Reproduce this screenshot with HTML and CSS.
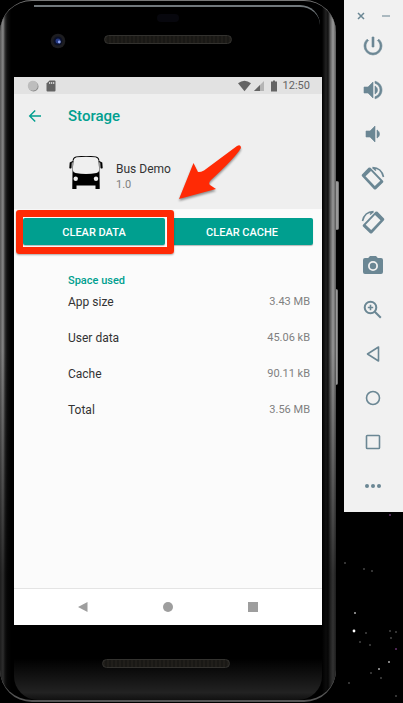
FILE: index.html
```html
<!DOCTYPE html>
<html lang="en">
<head>
<meta charset="utf-8">
<meta name="viewport" content="width=device-width">
<title>Storage</title>
<link rel="stylesheet" href="styles.css">
</head>
<body>
<svg class="stars" viewBox="0 0 67 191" aria-hidden="true">
  <g fill="#444"><circle cx="9" cy="51" r="1"/><circle cx="28" cy="57" r="1"/><circle cx="36" cy="59" r="1"/><circle cx="30" cy="121" r="1"/><circle cx="24" cy="130" r="1"/><circle cx="54" cy="119" r="1"/><circle cx="60" cy="120" r="1"/><circle cx="55" cy="126" r="1"/><circle cx="35" cy="161" r="1"/><circle cx="45" cy="166" r="1"/><circle cx="60" cy="184" r="1"/><circle cx="13" cy="171" r="1"/><circle cx="34" cy="133" r="1"/></g>
  <g fill="#aaa"><circle cx="19" cy="101" r="1"/><circle cx="53" cy="150" r="1"/><circle cx="43" cy="157" r="1"/></g>
  <circle cx="18" cy="119" r="1.4" fill="#fff"/>
  <g fill="#63306b"><circle cx="54" cy="3" r="1"/><circle cx="60" cy="137" r="1"/></g>
</svg>

<main class="phone">
  <span class="side-key power-key"></span>
  <span class="side-key volume-key"></span>
  <div class="bezel top">
    <svg class="camera" viewBox="0 0 16 16" aria-hidden="true"><circle cx="8" cy="8" r="7.3" fill="#1d1d20"/><circle cx="8" cy="8" r="4.5" fill="#0b1026"/><circle cx="8" cy="8" r="2.5" fill="#253a86"/><circle cx="9.300" cy="9" r="1.4" fill="#8fa6f2"/></svg>
    <span class="speaker"></span>
    <span class="sensor"></span>
  </div>

  <div class="screen">
    <div class="status">
      <svg class="s-dot" viewBox="0 0 12 12" aria-hidden="true"><circle cx="6.500" cy="6.500" r="5" fill="#888"/><circle cx="5.800" cy="5.800" r="5" fill="#bdbdbd"/></svg>
      <svg class="s-card" viewBox="0 0 10 12" aria-hidden="true"><path fill="#646464" d="M3.500.5H8.500Q9.500.5 9.500 1.500V10.500Q9.500 11.500 8.500 11.500H1.500Q.5 11.500.5 10.500V3.500Z"/><path stroke="#e2e2e2" d="M3.700 2v2M5.700 2v2M7.700 2v2"/></svg>
      <svg class="s-wifi" viewBox="0 0 13 12" aria-hidden="true"><path fill="#646464" d="M0 3.300Q6.500-1.800 13 3.300L6.500 11.300Z"/></svg>
      <svg class="s-signal" viewBox="0 0 10 12" aria-hidden="true"><path fill="#b5b5b5" d="M10 1V11H0Z"/><path fill="#646464" d="M6 5V11H0Z"/></svg>
      <svg class="s-battery" viewBox="0 0 6 12" aria-hidden="true"><path fill="#646464" d="M2 .5H4V1.500H6V11.500H0V1.500H2Z"/></svg>
      <time>12:50</time>
    </div>

    <header class="head">
      <div class="title-row">
        <button class="plain back" aria-label="Back"><svg viewBox="0 0 14 14" aria-hidden="true"><path fill="none" stroke="#009f8f" stroke-width="1.400" d="M13 7H2M7.200 1.500 1.700 7l5.500 5.500"/></svg></button>
        <h1>Storage</h1>
      </div>
      <div class="app">
        <svg class="bus" viewBox="0 0 34 34" aria-hidden="true">
          <path d="M7 .5Q17-.8 27 .5Q30 1 30.300 4L30.700 29V33H26.500V29.500H7.500V33H3.300V29L3.700 4Q4 1 7 .5Z"/>
          <path fill="#efefef" d="M7.500 1.300Q17 .2 26.500 1.300Q29.300 2 29.500 4.500L30.200 14Q30 16.500 27.500 17Q17 18.800 6.500 17Q4 16.500 3.800 14L4.500 4.500Q4.700 2 7.500 1.300Z"/>
          <path fill="none" stroke="#000" stroke-width="1.200" d="M4.200 5.500 1.800 6.500M29.800 5.500l2.400 1"/>
          <path d="M.7 6.500Q2 5.500 2.800 6.500L2.500 12Q1.500 13.200.3 12ZM33.300 6.500Q32 5.500 31.200 6.500L31.500 12Q32.500 13.200 33.700 12Z"/>
          <circle cx="6.700" cy="22.800" r="2.200" fill="#efefef"/><circle cx="27" cy="22.800" r="2.200" fill="#efefef"/>
        </svg>
        <div class="label"><p class="name">Bus Demo</p><p class="version">1.0</p></div>
      </div>
      <svg class="arrow" viewBox="0 0 66 58" aria-hidden="true"><path fill="#ff2a05" d="M2 53 16.500 17 21 26Q23 26.500 27 24.500L60 0Q64-2 64 2Q58 12 34 34Q31 37 33 39L39 43Z"/></svg>
    </header>

    <div class="actions">
      <div class="marked"><button class="action">CLEAR DATA</button></div>
      <button class="action">CLEAR CACHE</button>
    </div>

    <section class="usage">
      <h2 id="space">Space used</h2>
      <table aria-labelledby="space">
        <tr><th scope="row">App size</th><td>3.43 MB</td></tr>
        <tr><th scope="row">User data</th><td>45.06 kB</td></tr>
        <tr><th scope="row">Cache</th><td>90.11 kB</td></tr>
        <tr><th scope="row">Total</th><td>3.56 MB</td></tr>
      </table>
    </section>

    <nav class="nav">
      <button class="plain" aria-label="Back"><svg viewBox="0 0 12 12" aria-hidden="true"><path d="M10.500 1V11L1 6Z"/></svg></button>
      <button class="plain" aria-label="Home"><svg viewBox="0 0 12 12" aria-hidden="true"><circle cx="6" cy="6" r="5"/></svg></button>
      <button class="plain" aria-label="Overview"><svg viewBox="0 0 12 12" aria-hidden="true"><path d="M1 1H11V11H1Z"/></svg></button>
    </nav>
  </div>

  <div class="bezel bottom"><span class="speaker"></span></div>
</main>

<aside class="tools">
  <div class="window">
    <button class="plain" aria-label="Close"><svg viewBox="0 0 10 10" aria-hidden="true"><path d="M2 2 8 8M8 2 2 8"/></svg></button>
    <button class="plain" aria-label="Minimize"><svg viewBox="0 0 10 10" aria-hidden="true"><path opacity=".7" d="M1 5H9"/></svg></button>
  </div>
  <button class="plain tool" aria-label="Power"><svg class="bold" viewBox="0 0 24 24"><path d="M13 3h-2v10h2V3zm4.830 2.170l-1.420 1.420C17.990 7.860 19 9.810 19 12c0 3.870-3.130 7-7 7s-7-3.130-7-7c0-2.190 1.010-4.140 2.580-5.420L6.170 5.170C4.230 6.820 3 9.260 3 12a9 9 0 0018 0c0-2.740-1.230-5.180-3.170-6.830z"/></svg></button>
  <button class="plain tool" aria-label="Volume up"><svg class="bold" viewBox="0 0 24 24"><path d="M3 9v6h4l5 5V4L7 9H3zm13.500 3c0-1.770-1.020-3.290-2.500-4.030v8.050c1.480-.73 2.500-2.250 2.500-4.020zM14 3.230v2.060c2.890.86 5 3.540 5 6.710s-2.110 5.850-5 6.710v2.060c4.010-.91 7-4.490 7-8.770s-2.990-7.860-7-8.770z"/></svg></button>
  <button class="plain tool" aria-label="Volume down"><svg class="bold" viewBox="0 0 24 24"><path d="M18.500 12c0-1.770-1.020-3.290-2.500-4.030v8.050c1.480-.73 2.500-2.250 2.500-4.020zM5 9v6h4l5 5V4L9 9H5z"/></svg></button>
  <button class="plain tool" aria-label="Rotate left"><svg viewBox="0 0 24 24"><path fill-rule="evenodd" d="M7.500 1.800Q8.500 1 9.500 1.800L22 14.700Q22.800 15.700 22 16.500L15 23.200Q14 24 13 23.200L1 10.300Q.3 9.300 1 8.500ZM10 5 4.500 10.300 13.800 20 19.300 14.700Z"/><path class="line" d="M11.500 1.500Q20.500 1.800 22.500 11M11.500 1.500 15 4.500"/></svg></button>
  <button class="plain tool" aria-label="Rotate right"><svg class="flip" viewBox="0 0 24 24"><path fill-rule="evenodd" d="M7.500 1.800Q8.500 1 9.500 1.800L22 14.700Q22.800 15.700 22 16.500L15 23.200Q14 24 13 23.200L1 10.300Q.3 9.300 1 8.500ZM10 5 4.500 10.300 13.800 20 19.300 14.700Z"/><path class="line" d="M11.500 1.500Q20.500 1.800 22.500 11M11.500 1.500 15 4.500"/></svg></button>
  <button class="plain tool" aria-label="Screenshot"><svg viewBox="0 0 24 24"><path fill-rule="evenodd" d="M9 2 7.200 4H4Q2 4 2 6V18Q2 20 4 20H20Q22 20 22 18V6Q22 4 20 4H16.800L15 2ZM12 7A5 5 0 1 1 12 17A5 5 0 1 1 12 7Z"/><circle cx="12" cy="12" r="3.200"/></svg></button>
  <button class="plain tool" aria-label="Zoom"><svg viewBox="0 0 24 24"><circle class="line heavy" cx="9.500" cy="9.500" r="5.800"/><path class="line" d="M9.500 6.800V12.200M6.800 9.500H12.200"/><path class="line heavy" d="m13.800 13.800 6 6"/></svg></button>
  <button class="plain tool" aria-label="Back"><svg viewBox="0 0 24 24"><path class="line" d="M17.500 5V19L6.500 12Z"/></svg></button>
  <button class="plain tool" aria-label="Home"><svg viewBox="0 0 24 24"><circle class="line" cx="12" cy="12" r="6.500"/></svg></button>
  <button class="plain tool" aria-label="Overview"><svg viewBox="0 0 24 24"><rect class="line" x="5.500" y="5.500" width="13" height="13" rx=".8"/></svg></button>
  <button class="plain tool" aria-label="More"><svg viewBox="0 0 24 24"><circle cx="6" cy="12" r="2"/><circle cx="12" cy="12" r="2"/><circle cx="18" cy="12" r="2"/></svg></button>
</aside>
</body>
</html>
```
FILE: styles.css
```css
* { box-sizing: border-box; }

body {
  margin: 0;
  display: grid;
  grid-template-columns: minmax(0, 1fr) 59px;
  column-gap: 8px;
  align-items: start;
  position: relative;
  background: #000;
  font-family: Roboto, "Liberation Sans", sans-serif;
}

h1, h2, p { margin: 0; }
svg { display: block; }

.plain {
  padding: 0;
  border: 0;
  background: none;
}

.stars {
  position: absolute;
  right: 0;
  top: 512px;
  width: 67px;
  height: 191px;
}

/* Phone body */
.phone {
  position: relative;
  padding: 0 14px;
  border-radius: 32px;
  border-top: 1px solid #777;
  border-bottom: 2px solid #555;
  background:
    linear-gradient(#0000 50%, #000a 82%),
    linear-gradient(90deg, #555 0, #888 3px, #333 5px, #111 7px, #000 11px, #000 calc(100% - 14px), #222 calc(100% - 10px), #111 calc(100% - 8px), #555 calc(100% - 6px), #999 calc(100% - 3px), #555 100%);
}

.side-key {
  position: absolute;
  left: 100%;
  width: 3px;
  border: 1px solid #777;
  border-left: 0;
  border-radius: 0 2px 2px 0;
  background: #999;
}
.power-key { top: 180px; height: 49px; }
.volume-key { top: 288px; height: 96px; width: 2px; }

.bezel {
  position: relative;
  display: flex;
  justify-content: center;
}
.top {
  height: 76px;
  padding-top: 34px;
}
.top::before {
  content: "";
  position: absolute;
  inset: 4px 2px auto 20px;
  height: 20px;
  border-top: 2px solid #70777b;
  border-radius: 0 20px 0 0;
}
.bottom {
  height: 75px;
  padding: 34px 4px 0 0;
  background: linear-gradient(#000 45%, #222 90%, #111);
  border-radius: 0 0 24px 24px;
}
.speaker {
  width: 128px;
  height: 9px;
  border: 1px solid #33322f;
  border-radius: 5px;
  background: repeating-linear-gradient(90deg, #201e1a 0 2px, #191815 2px 4px);
}
.camera {
  position: absolute;
  left: 36px;
  top: 32px;
  width: 16px;
  height: 16px;
}
.sensor {
  position: absolute;
  left: 143px;
  top: 13px;
  width: 22px;
  height: 8px;
  border-radius: 4px;
  background: #07070d;
}

/* Screen */
.screen {
  position: relative;
  background: #fbfbfb;
}

.status {
  display: flex;
  align-items: center;
  height: 17px;
  padding: 0 12px 0 13px;
  background: #e2e2e2;
  color: #646464;
  font-size: 11px;
  line-height: 16px;
}
.status svg { height: 12px; }
.s-dot { width: 12px; margin-right: 7px; }
.s-card { width: 10px; margin-right: auto; }
.s-wifi { width: 13px; margin-right: 3px; }
.s-signal { width: 10px; margin-right: 7px; }
.s-battery { width: 6px; margin-right: 6px; }

.head {
  position: relative;
  height: 115px;
  padding: 10px 14px 0;
  background: #efefef;
}
.title-row {
  display: flex;
  align-items: center;
  gap: 26px;
  height: 24px;
}
.back svg { width: 14px; height: 14px; }
h1 {
  color: #009f8f;
  font-size: 15px;
  font-weight: 500;
  line-height: 24px;
}
.app {
  display: flex;
  align-items: flex-start;
  gap: 13px;
  padding: 28px 0 0 41px;
}
.bus { width: 34px; height: 34px; }
.label { padding-top: 5px; }
.name {
  color: #333;
  font-size: 12px;
  line-height: 16px;
}
.version {
  color: #808080;
  font-size: 11px;
  line-height: 16px;
}
.arrow {
  position: absolute;
  left: 163px;
  top: 52px;
  width: 66px;
  height: 58px;
  overflow: visible;
  filter: drop-shadow(0 2px 1px #0006);
}

.actions {
  display: grid;
  grid-template-columns: 1fr 1fr;
  gap: 6px;
  padding: 9px 9px 0;
}
.action {
  width: 100%;
  height: 27px;
  padding: 1px 0 0;
  border: 0;
  border-radius: 2px;
  background: #009f8f;
  color: #fff;
  font-family: inherit;
  font-size: 11px;
  font-weight: 500;
  box-shadow: 0 1px 1px #0004;
}
.marked { position: relative; }
.marked::after {
  content: "";
  position: absolute;
  inset: -8px -9px -9px -7px;
  border: 7px solid #ff2a05;
  border-radius: 3px;
  box-shadow: 0 1px 2px #0005;
  pointer-events: none;
}

.usage {
  min-height: 343px;
  padding: 28px 12px 0 54px;
}
h2 {
  color: #009f8f;
  font-size: 11px;
  font-weight: 500;
  line-height: 16px;
}
table {
  width: 100%;
  border-collapse: collapse;
}
th, td {
  height: 36px;
  padding: 5px 0 15px;
  line-height: 16px;
  font-weight: 400;
}
th {
  color: #333;
  font-size: 12px;
  text-align: left;
}
td {
  color: #808080;
  font-size: 11px;
  text-align: right;
}

.nav {
  display: flex;
  justify-content: center;
  align-items: center;
  gap: 73px;
  height: 37px;
  border-top: 1px solid #e4e4e4;
  background: #fff;
}
.nav svg { width: 12px; height: 12px; fill: #9e9e9e; }

/* Emulator controls */
.tools {
  position: relative;
  display: flex;
  flex-direction: column;
  padding: 0 1px 4px 0;
  background: #f1f1f1;
}
.window {
  display: flex;
  justify-content: center;
  gap: 15px;
  height: 24px;
  padding-top: 8px;
}
.window svg { width: 10px; height: 10px; }
.window path {
  stroke: #6b8794;
  stroke-width: 1.5;
}
.tool {
  display: flex;
  justify-content: center;
  align-items: center;
  height: 44px;
}
.tool svg { width: 24px; height: 24px; fill: #6b8794; }
.tool .bold {
  stroke: #6b8794;
  stroke-width: .6;
}
.tool .line {
  fill: none;
  stroke: #6b8794;
  stroke-width: 1.6;
  stroke-linejoin: round;
}
.tool .heavy { stroke-width: 2; }
.tool .flip { transform: scaleX(-1); }
```
